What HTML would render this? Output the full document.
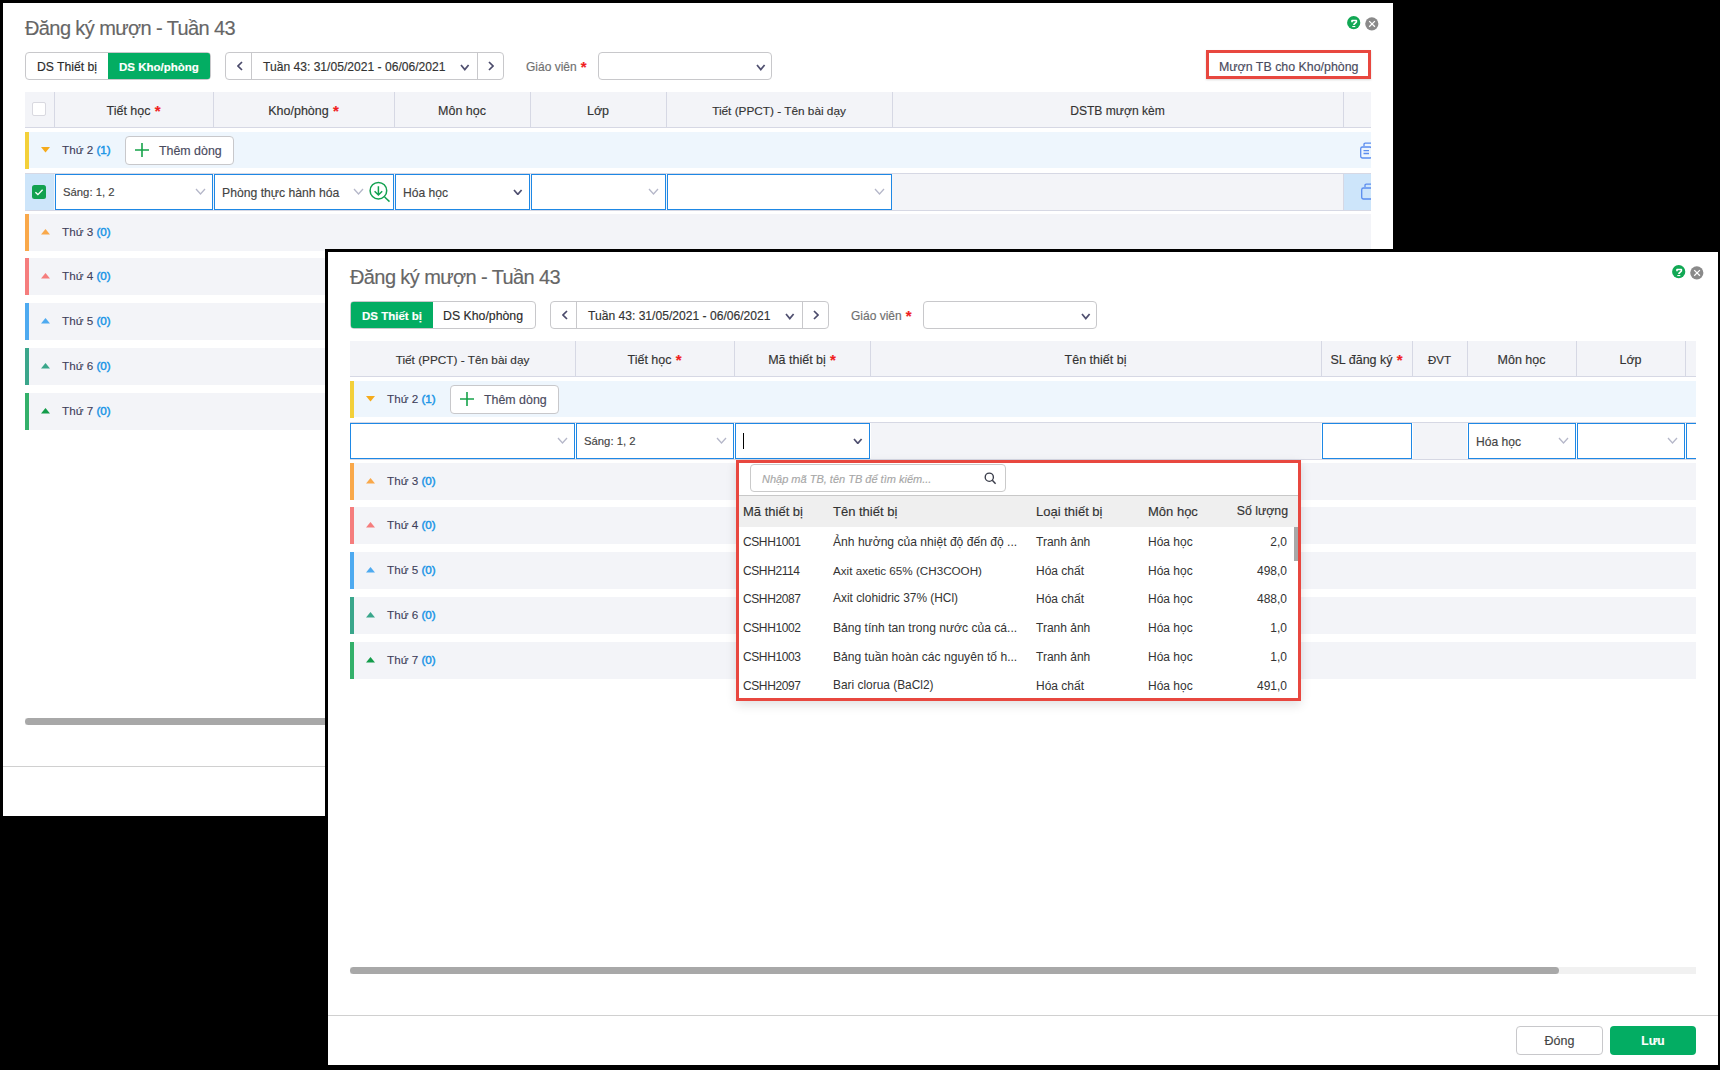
<!DOCTYPE html><html><head><meta charset="utf-8"><style>
html,body{margin:0;padding:0;width:1720px;height:1070px;overflow:hidden;background:#000;font-family:"Liberation Sans", sans-serif;}
div{font-family:"Liberation Sans", sans-serif;-webkit-text-stroke-width:0.15px;}
</style></head><body>
<div style="position:absolute;left:3px;top:3px;width:1390px;height:813px;box-sizing:border-box;background:#fff"></div>
<div style="position:absolute;left:25px;top:18px;font-size:20px;line-height:20px;color:#666;font-weight:normal;white-space:nowrap;letter-spacing:-0.6px">Đăng ký mượn - Tuần 43</div>
<svg style="position:absolute;left:1347px;top:16px" width="14" height="14"><circle cx="6.7" cy="6.7" r="6.6" fill="#11a854"/><path d="M5 6.3 V4.5 H9.4 V6 L7 8.4 V9" fill="none" stroke="#fff" stroke-width="1.6" stroke-linejoin="round"/><rect x="5.3" y="10" width="3" height="1.1" fill="#fff"/></svg><svg style="position:absolute;left:1365px;top:17px" width="14" height="14"><circle cx="6.8" cy="6.8" r="6.6" fill="#8a8a8a"/><path d="M4.2 4.1 L9.9 9.8 M9.9 4.1 L4.2 9.8" stroke="#fff" stroke-width="1.25"/></svg>
<div style="position:absolute;left:25px;top:52px;width:186px;height:28px;box-sizing:border-box;border:1px solid #c8c8cb;border-radius:4px;background:#fff"></div><div style="position:absolute;left:108px;top:53px;width:102px;height:26px;box-sizing:border-box;background:#03ad63;border-radius:0 2px 2px 0"></div><div style="position:absolute;left:37px;top:61px;font-size:12.2px;line-height:12.2px;color:#2b2b2b;font-weight:normal;white-space:nowrap;">DS Thiết bị</div><div style="position:absolute;left:119px;top:62px;font-size:11.5px;line-height:11.5px;color:#fff;font-weight:bold;white-space:nowrap;">DS Kho/phòng</div><div style="position:absolute;left:225px;top:52px;width:279px;height:28px;box-sizing:border-box;border:1px solid #c8c8cb;border-radius:4px;background:#fff"></div><div style="position:absolute;left:251px;top:53px;width:1px;height:26px;box-sizing:border-box;background:#c8c8cb"></div><div style="position:absolute;left:477px;top:53px;width:1px;height:26px;box-sizing:border-box;background:#c8c8cb"></div><svg style="position:absolute;left:237px;top:61px" width="6" height="10"><polyline points="5,1 1,5.0 5,9" fill="none" stroke="#4b4b6b" stroke-width="1.7"/></svg><svg style="position:absolute;left:488px;top:61px" width="6" height="10"><polyline points="1,1 5,5.0 1,9" fill="none" stroke="#4b4b6b" stroke-width="1.7"/></svg><div style="position:absolute;left:263px;top:61px;font-size:12.1px;line-height:12.1px;color:#333;font-weight:normal;white-space:nowrap;">Tuần 43: 31/05/2021 - 06/06/2021</div><svg style="position:absolute;left:460px;top:64px" width="9.6" height="6.6"><polyline points="1,1 4.8,5.6 8.6,1" fill="none" stroke="#505070" stroke-width="1.7"/></svg><div style="position:absolute;left:526px;top:61px;font-size:12px;line-height:12px;color:#707070;font-weight:normal;white-space:nowrap;">Giáo viên<span style="color:#f01e1e;font-size:15px;font-weight:bold;vertical-align:top;line-height:12px"> *</span></div><div style="position:absolute;left:598px;top:52px;width:174px;height:28px;box-sizing:border-box;border:1px solid #c8c8cb;border-radius:4px;background:#fff"></div><svg style="position:absolute;left:756px;top:64px" width="9.6" height="6.6"><polyline points="1,1 4.8,5.6 8.6,1" fill="none" stroke="#505070" stroke-width="1.7"/></svg>
<div style="position:absolute;left:1206px;top:50px;width:165px;height:29px;box-sizing:border-box;border:3px solid #e8473f;background:#fff;box-shadow:0 1px 2px rgba(0,0,0,.15)"></div>
<div style="position:absolute;left:1219px;top:61px;font-size:12.4px;line-height:12.4px;color:#4a4b5e;font-weight:normal;white-space:nowrap;">Mượn TB cho Kho/phòng</div>
<div style="position:absolute;left:25px;top:92px;width:1346px;height:36px;box-sizing:border-box;background:#f3f4f8;border-bottom:1px solid #d6d8e4"></div><div style="position:absolute;left:54px;top:92px;width:1px;height:35px;box-sizing:border-box;background:#d6d8e4"></div><div style="position:absolute;left:213px;top:92px;width:1px;height:35px;box-sizing:border-box;background:#d6d8e4"></div><div style="position:absolute;left:394px;top:92px;width:1px;height:35px;box-sizing:border-box;background:#d6d8e4"></div><div style="position:absolute;left:530px;top:92px;width:1px;height:35px;box-sizing:border-box;background:#d6d8e4"></div><div style="position:absolute;left:666px;top:92px;width:1px;height:35px;box-sizing:border-box;background:#d6d8e4"></div><div style="position:absolute;left:892px;top:92px;width:1px;height:35px;box-sizing:border-box;background:#d6d8e4"></div><div style="position:absolute;left:1343px;top:92px;width:1px;height:35px;box-sizing:border-box;background:#d6d8e4"></div>
<div style="position:absolute;left:32px;top:102px;width:14px;height:14px;box-sizing:border-box;border:1px solid #d9d9e0;border-radius:2px;background:#fff"></div>
<div style="position:absolute;left:54px;top:105px;width:159px;text-align:center;font-size:12.5px;line-height:12px;color:#333;white-space:nowrap">Tiết học<span style="color:#f01e1e;font-size:15px;font-weight:bold;vertical-align:top;line-height:12px"> *</span></div>
<div style="position:absolute;left:213px;top:105px;width:181px;text-align:center;font-size:12.5px;line-height:12px;color:#333;white-space:nowrap">Kho/phòng<span style="color:#f01e1e;font-size:15px;font-weight:bold;vertical-align:top;line-height:12px"> *</span></div>
<div style="position:absolute;left:394px;top:105px;width:136px;text-align:center;font-size:12.5px;line-height:12px;color:#333;white-space:nowrap">Môn học</div>
<div style="position:absolute;left:530px;top:105px;width:136px;text-align:center;font-size:12.5px;line-height:12px;color:#333;white-space:nowrap">Lớp</div>
<div style="position:absolute;left:666px;top:105px;width:226px;text-align:center;font-size:11.8px;line-height:12px;color:#333;white-space:nowrap">Tiết (PPCT) - Tên bài dạy</div>
<div style="position:absolute;left:892px;top:105px;width:451px;text-align:center;font-size:12.1px;line-height:12px;color:#333;white-space:nowrap">DSTB mượn kèm</div>
<div style="position:absolute;left:25px;top:132px;width:1346px;height:36px;box-sizing:border-box;background:#eef6fd"></div><div style="position:absolute;left:25px;top:132px;width:4px;height:37px;box-sizing:border-box;background:#f3d03a"></div><svg style="position:absolute;left:41px;top:147px" width="9" height="6"><polygon points="0,0 9,0 4.5,5.5" fill="#f5ab1c"/></svg><div style="position:absolute;left:62px;top:144px;font-size:11.7px;line-height:11.7px;color:#3e3f5a;font-weight:normal;white-space:nowrap;-webkit-text-stroke-width:0.1px">Thứ 2 <span style="color:#1a95e6;-webkit-text-stroke-width:0.45px">(1)</span></div><div style="position:absolute;left:125px;top:136px;width:109px;height:29px;box-sizing:border-box;border:1px solid #c8c8cb;border-radius:4px;background:#fff"></div><svg style="position:absolute;left:135px;top:143px" width="14" height="14"><path d="M7 0 V14 M0 7 H14" stroke="#16a34a" stroke-width="1.6"/></svg><div style="position:absolute;left:159px;top:145px;font-size:12.4px;line-height:12.4px;color:#4a4b5e;font-weight:normal;white-space:nowrap;">Thêm dòng</div>
<div style="position:absolute;left:1343px;top:132px;width:28px;height:37px;overflow:hidden"><svg style="position:absolute;left:17px;top:10px" width="20" height="20"><path d="M4 4 V2.5 Q4 1.2 5.3 1.2 H14" fill="none" stroke="#5b8def" stroke-width="1.3"/><rect x="0.7" y="5" width="11" height="11" rx="1.8" fill="none" stroke="#5b8def" stroke-width="1.3"/><path d="M3.5 8.7 H9 M3.5 11.5 H9" stroke="#5b8def" stroke-width="1.3"/></svg></div>
<div style="position:absolute;left:25px;top:173px;width:1346px;height:38px;box-sizing:border-box;background:#f3f4f8;border-top:1px solid #d6d8e4;border-bottom:1px solid #d6d8e4"></div>
<div style="position:absolute;left:25px;top:174px;width:29px;height:36px;box-sizing:border-box;background:#cde5fa"></div>
<div style="position:absolute;left:1344px;top:174px;width:27px;height:36px;box-sizing:border-box;background:#cde5fa"></div>
<div style="position:absolute;left:1343px;top:174px;width:1px;height:36px;box-sizing:border-box;background:#d6d8e4"></div>
<div style="position:absolute;left:32px;top:185px;width:14px;height:14px;box-sizing:border-box;background:#12a150;border-radius:2.5px"></div>
<svg style="position:absolute;left:32px;top:185px" width="14" height="14"><polyline points="3.4,7.3 5.9,9.6 10.6,4.8" fill="none" stroke="#fff" stroke-width="1.35"/></svg>
<div style="position:absolute;left:55px;top:174px;width:158px;height:36px;box-sizing:border-box;border:1px solid #1e88e5;background:#fff"></div>
<div style="position:absolute;left:63px;top:187px;font-size:11.3px;line-height:11.3px;color:#444;font-weight:normal;white-space:nowrap;">Sáng: 1, 2</div>
<svg style="position:absolute;left:195px;top:188px" width="11" height="7"><polyline points="1,1 5.5,6 10,1" fill="none" stroke="#b5b7c9" stroke-width="1.3"/></svg>
<div style="position:absolute;left:214px;top:174px;width:180px;height:36px;box-sizing:border-box;border:1px solid #1e88e5;background:#fff"></div>
<div style="position:absolute;left:222px;top:187px;font-size:12.2px;line-height:12.2px;color:#444;font-weight:normal;white-space:nowrap;">Phòng thực hành hóa</div>
<svg style="position:absolute;left:353px;top:188px" width="11" height="7"><polyline points="1,1 5.5,6 10,1" fill="none" stroke="#b5b7c9" stroke-width="1.3"/></svg>
<div style="position:absolute;left:395px;top:174px;width:135px;height:36px;box-sizing:border-box;border:1px solid #1e88e5;background:#fff"></div>
<div style="position:absolute;left:403px;top:187px;font-size:12.1px;line-height:12.1px;color:#444;font-weight:normal;white-space:nowrap;">Hóa học</div>
<svg style="position:absolute;left:513px;top:189px" width="9.6" height="6.4"><polyline points="1,1 4.8,5.4 8.6,1" fill="none" stroke="#505070" stroke-width="1.7"/></svg>
<div style="position:absolute;left:531px;top:174px;width:135px;height:36px;box-sizing:border-box;border:1px solid #1e88e5;background:#fff"></div>
<svg style="position:absolute;left:648px;top:188px" width="11" height="7"><polyline points="1,1 5.5,6 10,1" fill="none" stroke="#b5b7c9" stroke-width="1.3"/></svg>
<div style="position:absolute;left:667px;top:174px;width:225px;height:36px;box-sizing:border-box;border:1px solid #1e88e5;background:#fff"></div>
<svg style="position:absolute;left:874px;top:188px" width="11" height="7"><polyline points="1,1 5.5,6 10,1" fill="none" stroke="#b5b7c9" stroke-width="1.3"/></svg>
<svg style="position:absolute;left:368px;top:180px" width="24" height="24"><circle cx="10.4" cy="10.7" r="8.3" fill="none" stroke="#12a150" stroke-width="1.5"/><path d="M10.4 6.2 V15 M6.6 11.2 L10.4 15 L14.2 11.2" fill="none" stroke="#12a150" stroke-width="1.5"/><path d="M16.6 17 L21.5 21.6" stroke="#12a150" stroke-width="1.5"/></svg>
<div style="position:absolute;left:1344px;top:174px;width:27px;height:35px;overflow:hidden"><svg style="position:absolute;left:17px;top:9px" width="20" height="20"><path d="M4 4 V2.5 Q4 1.2 5.3 1.2 H14" fill="none" stroke="#5b8def" stroke-width="1.3"/><rect x="0.7" y="5" width="11" height="11" rx="1.8" fill="none" stroke="#5b8def" stroke-width="1.3"/></svg></div>
<div style="position:absolute;left:25px;top:214px;width:1346px;height:37px;box-sizing:border-box;background:#f3f4f8"></div><div style="position:absolute;left:25px;top:214px;width:4px;height:37px;box-sizing:border-box;background:#f9a84a"></div><svg style="position:absolute;left:41px;top:229px" width="9" height="6"><polygon points="0,5.5 9,5.5 4.5,0" fill="#f9a84a"/></svg><div style="position:absolute;left:62px;top:226px;font-size:11.7px;line-height:11.7px;color:#3e3f5a;font-weight:normal;white-space:nowrap;-webkit-text-stroke-width:0.1px">Thứ 3 <span style="color:#1a95e6;-webkit-text-stroke-width:0.45px">(0)</span></div>
<div style="position:absolute;left:25px;top:258px;width:1346px;height:37px;box-sizing:border-box;background:#f3f4f8"></div><div style="position:absolute;left:25px;top:258px;width:4px;height:37px;box-sizing:border-box;background:#f57d7d"></div><svg style="position:absolute;left:41px;top:273px" width="9" height="6"><polygon points="0,5.5 9,5.5 4.5,0" fill="#f57d7d"/></svg><div style="position:absolute;left:62px;top:270px;font-size:11.7px;line-height:11.7px;color:#3e3f5a;font-weight:normal;white-space:nowrap;-webkit-text-stroke-width:0.1px">Thứ 4 <span style="color:#1a95e6;-webkit-text-stroke-width:0.45px">(0)</span></div>
<div style="position:absolute;left:25px;top:303px;width:1346px;height:37px;box-sizing:border-box;background:#f3f4f8"></div><div style="position:absolute;left:25px;top:303px;width:4px;height:37px;box-sizing:border-box;background:#4eaaf0"></div><svg style="position:absolute;left:41px;top:318px" width="9" height="6"><polygon points="0,5.5 9,5.5 4.5,0" fill="#4eaaf0"/></svg><div style="position:absolute;left:62px;top:315px;font-size:11.7px;line-height:11.7px;color:#3e3f5a;font-weight:normal;white-space:nowrap;-webkit-text-stroke-width:0.1px">Thứ 5 <span style="color:#1a95e6;-webkit-text-stroke-width:0.45px">(0)</span></div>
<div style="position:absolute;left:25px;top:348px;width:1346px;height:37px;box-sizing:border-box;background:#f3f4f8"></div><div style="position:absolute;left:25px;top:348px;width:4px;height:37px;box-sizing:border-box;background:#3aa68b"></div><svg style="position:absolute;left:41px;top:363px" width="9" height="6"><polygon points="0,5.5 9,5.5 4.5,0" fill="#3aa68b"/></svg><div style="position:absolute;left:62px;top:360px;font-size:11.7px;line-height:11.7px;color:#3e3f5a;font-weight:normal;white-space:nowrap;-webkit-text-stroke-width:0.1px">Thứ 6 <span style="color:#1a95e6;-webkit-text-stroke-width:0.45px">(0)</span></div>
<div style="position:absolute;left:25px;top:393px;width:1346px;height:37px;box-sizing:border-box;background:#f3f4f8"></div><div style="position:absolute;left:25px;top:393px;width:4px;height:37px;box-sizing:border-box;background:#33b06a"></div><svg style="position:absolute;left:41px;top:408px" width="9" height="6"><polygon points="0,5.5 9,5.5 4.5,0" fill="#139c4a"/></svg><div style="position:absolute;left:62px;top:405px;font-size:11.7px;line-height:11.7px;color:#3e3f5a;font-weight:normal;white-space:nowrap;-webkit-text-stroke-width:0.1px">Thứ 7 <span style="color:#1a95e6;-webkit-text-stroke-width:0.45px">(0)</span></div>
<div style="position:absolute;left:25px;top:718px;width:1346px;height:7px;box-sizing:border-box;background:#f1f1f1"></div>
<div style="position:absolute;left:25px;top:718px;width:1209px;height:7px;box-sizing:border-box;background:#a8a8a8;border-radius:4px"></div>
<div style="position:absolute;left:3px;top:766px;width:1390px;height:1px;box-sizing:border-box;background:#d0d0d0"></div>
<div style="position:absolute;left:325px;top:249px;width:1396px;height:819px;box-sizing:border-box;background:#000"></div>
<div style="position:absolute;left:328px;top:252px;width:1390px;height:813px;box-sizing:border-box;background:#fff"></div>
<div style="position:absolute;left:350px;top:267px;font-size:20px;line-height:20px;color:#666;font-weight:normal;white-space:nowrap;letter-spacing:-0.6px">Đăng ký mượn - Tuần 43</div>
<svg style="position:absolute;left:1672px;top:265px" width="14" height="14"><circle cx="6.7" cy="6.7" r="6.6" fill="#11a854"/><path d="M5 6.3 V4.5 H9.4 V6 L7 8.4 V9" fill="none" stroke="#fff" stroke-width="1.6" stroke-linejoin="round"/><rect x="5.3" y="10" width="3" height="1.1" fill="#fff"/></svg><svg style="position:absolute;left:1690px;top:266px" width="14" height="14"><circle cx="6.8" cy="6.8" r="6.6" fill="#8a8a8a"/><path d="M4.2 4.1 L9.9 9.8 M9.9 4.1 L4.2 9.8" stroke="#fff" stroke-width="1.25"/></svg>
<div style="position:absolute;left:350px;top:301px;width:186px;height:28px;box-sizing:border-box;border:1px solid #c8c8cb;border-radius:4px;background:#fff"></div><div style="position:absolute;left:351px;top:302px;width:82px;height:26px;box-sizing:border-box;background:#03ad63;border-radius:2px 0 0 2px"></div><div style="position:absolute;left:362px;top:311px;font-size:11.5px;line-height:11.5px;color:#fff;font-weight:bold;white-space:nowrap;">DS Thiết bị</div><div style="position:absolute;left:443px;top:310px;font-size:12.3px;line-height:12.3px;color:#2b2b2b;font-weight:normal;white-space:nowrap;">DS Kho/phòng</div><div style="position:absolute;left:550px;top:301px;width:279px;height:28px;box-sizing:border-box;border:1px solid #c8c8cb;border-radius:4px;background:#fff"></div><div style="position:absolute;left:576px;top:302px;width:1px;height:26px;box-sizing:border-box;background:#c8c8cb"></div><div style="position:absolute;left:802px;top:302px;width:1px;height:26px;box-sizing:border-box;background:#c8c8cb"></div><svg style="position:absolute;left:562px;top:310px" width="6" height="10"><polyline points="5,1 1,5.0 5,9" fill="none" stroke="#4b4b6b" stroke-width="1.7"/></svg><svg style="position:absolute;left:813px;top:310px" width="6" height="10"><polyline points="1,1 5,5.0 1,9" fill="none" stroke="#4b4b6b" stroke-width="1.7"/></svg><div style="position:absolute;left:588px;top:310px;font-size:12.1px;line-height:12.1px;color:#333;font-weight:normal;white-space:nowrap;">Tuần 43: 31/05/2021 - 06/06/2021</div><svg style="position:absolute;left:785px;top:313px" width="9.6" height="6.6"><polyline points="1,1 4.8,5.6 8.6,1" fill="none" stroke="#505070" stroke-width="1.7"/></svg><div style="position:absolute;left:851px;top:310px;font-size:12px;line-height:12px;color:#707070;font-weight:normal;white-space:nowrap;">Giáo viên<span style="color:#f01e1e;font-size:15px;font-weight:bold;vertical-align:top;line-height:12px"> *</span></div><div style="position:absolute;left:923px;top:301px;width:174px;height:28px;box-sizing:border-box;border:1px solid #c8c8cb;border-radius:4px;background:#fff"></div><svg style="position:absolute;left:1081px;top:313px" width="9.6" height="6.6"><polyline points="1,1 4.8,5.6 8.6,1" fill="none" stroke="#505070" stroke-width="1.7"/></svg>
<div style="position:absolute;left:350px;top:341px;width:1346px;height:36px;box-sizing:border-box;background:#f3f4f8;border-bottom:1px solid #d6d8e4"></div><div style="position:absolute;left:575px;top:341px;width:1px;height:35px;box-sizing:border-box;background:#d6d8e4"></div><div style="position:absolute;left:734px;top:341px;width:1px;height:35px;box-sizing:border-box;background:#d6d8e4"></div><div style="position:absolute;left:870px;top:341px;width:1px;height:35px;box-sizing:border-box;background:#d6d8e4"></div><div style="position:absolute;left:1321px;top:341px;width:1px;height:35px;box-sizing:border-box;background:#d6d8e4"></div><div style="position:absolute;left:1412px;top:341px;width:1px;height:35px;box-sizing:border-box;background:#d6d8e4"></div><div style="position:absolute;left:1467px;top:341px;width:1px;height:35px;box-sizing:border-box;background:#d6d8e4"></div><div style="position:absolute;left:1576px;top:341px;width:1px;height:35px;box-sizing:border-box;background:#d6d8e4"></div><div style="position:absolute;left:1685px;top:341px;width:1px;height:35px;box-sizing:border-box;background:#d6d8e4"></div>
<div style="position:absolute;left:350px;top:354px;width:225px;text-align:center;font-size:11.8px;line-height:12px;color:#333;white-space:nowrap">Tiết (PPCT) - Tên bài dạy</div>
<div style="position:absolute;left:575px;top:354px;width:159px;text-align:center;font-size:12.5px;line-height:12px;color:#333;white-space:nowrap">Tiết học<span style="color:#f01e1e;font-size:15px;font-weight:bold;vertical-align:top;line-height:12px"> *</span></div>
<div style="position:absolute;left:734px;top:354px;width:136px;text-align:center;font-size:12.5px;line-height:12px;color:#333;white-space:nowrap">Mã thiết bị<span style="color:#f01e1e;font-size:15px;font-weight:bold;vertical-align:top;line-height:12px"> *</span></div>
<div style="position:absolute;left:870px;top:354px;width:451px;text-align:center;font-size:12.5px;line-height:12px;color:#333;white-space:nowrap">Tên thiết bị</div>
<div style="position:absolute;left:1321px;top:354px;width:91px;text-align:center;font-size:12.5px;line-height:12px;color:#333;white-space:nowrap">SL đăng ký<span style="color:#f01e1e;font-size:15px;font-weight:bold;vertical-align:top;line-height:12px"> *</span></div>
<div style="position:absolute;left:1412px;top:354px;width:55px;text-align:center;font-size:11.5px;line-height:12px;color:#333;white-space:nowrap">ĐVT</div>
<div style="position:absolute;left:1467px;top:354px;width:109px;text-align:center;font-size:12.5px;line-height:12px;color:#333;white-space:nowrap">Môn học</div>
<div style="position:absolute;left:1576px;top:354px;width:109px;text-align:center;font-size:12.5px;line-height:12px;color:#333;white-space:nowrap">Lớp</div>
<div style="position:absolute;left:350px;top:381px;width:1346px;height:36px;box-sizing:border-box;background:#eef6fd"></div><div style="position:absolute;left:350px;top:381px;width:4px;height:37px;box-sizing:border-box;background:#f3d03a"></div><svg style="position:absolute;left:366px;top:396px" width="9" height="6"><polygon points="0,0 9,0 4.5,5.5" fill="#f5ab1c"/></svg><div style="position:absolute;left:387px;top:393px;font-size:11.7px;line-height:11.7px;color:#3e3f5a;font-weight:normal;white-space:nowrap;-webkit-text-stroke-width:0.1px">Thứ 2 <span style="color:#1a95e6;-webkit-text-stroke-width:0.45px">(1)</span></div><div style="position:absolute;left:450px;top:385px;width:109px;height:29px;box-sizing:border-box;border:1px solid #c8c8cb;border-radius:4px;background:#fff"></div><svg style="position:absolute;left:460px;top:392px" width="14" height="14"><path d="M7 0 V14 M0 7 H14" stroke="#16a34a" stroke-width="1.6"/></svg><div style="position:absolute;left:484px;top:394px;font-size:12.4px;line-height:12.4px;color:#4a4b5e;font-weight:normal;white-space:nowrap;">Thêm dòng</div>
<div style="position:absolute;left:350px;top:422px;width:1346px;height:38px;box-sizing:border-box;background:#f3f4f8;border-top:1px solid #d6d8e4;border-bottom:1px solid #d6d8e4"></div>
<div style="position:absolute;left:575px;top:423px;width:1px;height:35px;box-sizing:border-box;background:#fff"></div>
<div style="position:absolute;left:734px;top:423px;width:1px;height:35px;box-sizing:border-box;background:#fff"></div>
<div style="position:absolute;left:870px;top:423px;width:1px;height:35px;box-sizing:border-box;background:#fff"></div>
<div style="position:absolute;left:1321px;top:423px;width:1px;height:35px;box-sizing:border-box;background:#fff"></div>
<div style="position:absolute;left:1412px;top:423px;width:1px;height:35px;box-sizing:border-box;background:#fff"></div>
<div style="position:absolute;left:1467px;top:423px;width:1px;height:35px;box-sizing:border-box;background:#fff"></div>
<div style="position:absolute;left:1576px;top:423px;width:1px;height:35px;box-sizing:border-box;background:#fff"></div>
<div style="position:absolute;left:1685px;top:423px;width:1px;height:35px;box-sizing:border-box;background:#fff"></div>
<div style="position:absolute;left:350px;top:423px;width:225px;height:36px;box-sizing:border-box;border:1px solid #1e88e5;background:#fff"></div>
<svg style="position:absolute;left:557px;top:437px" width="11" height="7"><polyline points="1,1 5.5,6 10,1" fill="none" stroke="#b5b7c9" stroke-width="1.3"/></svg>
<div style="position:absolute;left:576px;top:423px;width:158px;height:36px;box-sizing:border-box;border:1px solid #1e88e5;background:#fff"></div>
<div style="position:absolute;left:584px;top:436px;font-size:11.3px;line-height:11.3px;color:#444;font-weight:normal;white-space:nowrap;">Sáng: 1, 2</div>
<svg style="position:absolute;left:716px;top:437px" width="11" height="7"><polyline points="1,1 5.5,6 10,1" fill="none" stroke="#b5b7c9" stroke-width="1.3"/></svg>
<div style="position:absolute;left:735px;top:423px;width:135px;height:36px;box-sizing:border-box;border:1px solid #1e88e5;background:#fff"></div>
<svg style="position:absolute;left:853px;top:438px" width="9.6" height="6.4"><polyline points="1,1 4.8,5.4 8.6,1" fill="none" stroke="#505070" stroke-width="1.7"/></svg>
<div style="position:absolute;left:1322px;top:423px;width:90px;height:36px;box-sizing:border-box;border:1px solid #1e88e5;background:#fff"></div>
<div style="position:absolute;left:1468px;top:423px;width:108px;height:36px;box-sizing:border-box;border:1px solid #1e88e5;background:#fff"></div>
<div style="position:absolute;left:1476px;top:436px;font-size:12.1px;line-height:12.1px;color:#444;font-weight:normal;white-space:nowrap;">Hóa học</div>
<svg style="position:absolute;left:1558px;top:437px" width="11" height="7"><polyline points="1,1 5.5,6 10,1" fill="none" stroke="#b5b7c9" stroke-width="1.3"/></svg>
<div style="position:absolute;left:1577px;top:423px;width:108px;height:36px;box-sizing:border-box;border:1px solid #1e88e5;background:#fff"></div>
<svg style="position:absolute;left:1667px;top:437px" width="11" height="7"><polyline points="1,1 5.5,6 10,1" fill="none" stroke="#b5b7c9" stroke-width="1.3"/></svg>
<div style="position:absolute;left:1686px;top:423px;width:10px;height:36px;box-sizing:border-box;border:1px solid #1e88e5;border-right:none;background:#fff"></div>
<div style="position:absolute;left:743px;top:433px;width:1px;height:16px;box-sizing:border-box;background:#000"></div>
<div style="position:absolute;left:350px;top:463px;width:1346px;height:37px;box-sizing:border-box;background:#f3f4f8"></div><div style="position:absolute;left:350px;top:463px;width:4px;height:37px;box-sizing:border-box;background:#f9a84a"></div><svg style="position:absolute;left:366px;top:478px" width="9" height="6"><polygon points="0,5.5 9,5.5 4.5,0" fill="#f9a84a"/></svg><div style="position:absolute;left:387px;top:475px;font-size:11.7px;line-height:11.7px;color:#3e3f5a;font-weight:normal;white-space:nowrap;-webkit-text-stroke-width:0.1px">Thứ 3 <span style="color:#1a95e6;-webkit-text-stroke-width:0.45px">(0)</span></div>
<div style="position:absolute;left:350px;top:507px;width:1346px;height:37px;box-sizing:border-box;background:#f3f4f8"></div><div style="position:absolute;left:350px;top:507px;width:4px;height:37px;box-sizing:border-box;background:#f57d7d"></div><svg style="position:absolute;left:366px;top:522px" width="9" height="6"><polygon points="0,5.5 9,5.5 4.5,0" fill="#f57d7d"/></svg><div style="position:absolute;left:387px;top:519px;font-size:11.7px;line-height:11.7px;color:#3e3f5a;font-weight:normal;white-space:nowrap;-webkit-text-stroke-width:0.1px">Thứ 4 <span style="color:#1a95e6;-webkit-text-stroke-width:0.45px">(0)</span></div>
<div style="position:absolute;left:350px;top:552px;width:1346px;height:37px;box-sizing:border-box;background:#f3f4f8"></div><div style="position:absolute;left:350px;top:552px;width:4px;height:37px;box-sizing:border-box;background:#4eaaf0"></div><svg style="position:absolute;left:366px;top:567px" width="9" height="6"><polygon points="0,5.5 9,5.5 4.5,0" fill="#4eaaf0"/></svg><div style="position:absolute;left:387px;top:564px;font-size:11.7px;line-height:11.7px;color:#3e3f5a;font-weight:normal;white-space:nowrap;-webkit-text-stroke-width:0.1px">Thứ 5 <span style="color:#1a95e6;-webkit-text-stroke-width:0.45px">(0)</span></div>
<div style="position:absolute;left:350px;top:597px;width:1346px;height:37px;box-sizing:border-box;background:#f3f4f8"></div><div style="position:absolute;left:350px;top:597px;width:4px;height:37px;box-sizing:border-box;background:#3aa68b"></div><svg style="position:absolute;left:366px;top:612px" width="9" height="6"><polygon points="0,5.5 9,5.5 4.5,0" fill="#3aa68b"/></svg><div style="position:absolute;left:387px;top:609px;font-size:11.7px;line-height:11.7px;color:#3e3f5a;font-weight:normal;white-space:nowrap;-webkit-text-stroke-width:0.1px">Thứ 6 <span style="color:#1a95e6;-webkit-text-stroke-width:0.45px">(0)</span></div>
<div style="position:absolute;left:350px;top:642px;width:1346px;height:37px;box-sizing:border-box;background:#f3f4f8"></div><div style="position:absolute;left:350px;top:642px;width:4px;height:37px;box-sizing:border-box;background:#33b06a"></div><svg style="position:absolute;left:366px;top:657px" width="9" height="6"><polygon points="0,5.5 9,5.5 4.5,0" fill="#139c4a"/></svg><div style="position:absolute;left:387px;top:654px;font-size:11.7px;line-height:11.7px;color:#3e3f5a;font-weight:normal;white-space:nowrap;-webkit-text-stroke-width:0.1px">Thứ 7 <span style="color:#1a95e6;-webkit-text-stroke-width:0.45px">(0)</span></div>
<div style="position:absolute;left:350px;top:967px;width:1346px;height:7px;box-sizing:border-box;background:#f1f1f1"></div>
<div style="position:absolute;left:350px;top:967px;width:1209px;height:7px;box-sizing:border-box;background:#a8a8a8;border-radius:4px"></div>
<div style="position:absolute;left:328px;top:1015px;width:1390px;height:1px;box-sizing:border-box;background:#d0d0d0"></div>
<div style="position:absolute;left:1516px;top:1026px;width:87px;height:29px;box-sizing:border-box;border:1px solid #c8c8cb;border-radius:4px;background:#fff"></div>
<div style="position:absolute;left:1516px;top:1035px;width:87px;text-align:center;font-size:12.5px;line-height:12px;color:#444">Đóng</div>
<div style="position:absolute;left:1610px;top:1026px;width:86px;height:29px;box-sizing:border-box;border-radius:4px;background:#03ad63"></div>
<div style="position:absolute;left:1610px;top:1035px;width:86px;text-align:center;font-size:12px;line-height:12px;color:#fff;font-weight:bold">Lưu</div>
<div style="position:absolute;left:736px;top:460px;width:565px;height:241px;box-sizing:border-box;border:3px solid #e8473f;background:#fff;box-shadow:0 4px 10px rgba(0,0,0,.12)"></div>
<div style="position:absolute;left:750px;top:464px;width:256px;height:28px;box-sizing:border-box;border:1px solid #cacaca;border-radius:4px;background:#fff"></div>
<div style="position:absolute;left:762px;top:474px;font-size:11px;line-height:11px;color:#a7a7a7;font-weight:normal;white-space:nowrap;font-style:italic">Nhập mã TB, tên TB để tìm kiếm...</div>
<svg style="position:absolute;left:983px;top:471px" width="14" height="14"><circle cx="6.3" cy="6.2" r="4.1" fill="none" stroke="#3a3d4a" stroke-width="1.35"/><path d="M9.3 9.3 L12.6 12.8" stroke="#3a3d4a" stroke-width="1.5"/></svg>
<div style="position:absolute;left:739px;top:495px;width:559px;height:1px;box-sizing:border-box;background:#c8c8c8"></div>
<div style="position:absolute;left:739px;top:496px;width:559px;height:31px;box-sizing:border-box;background:#efefef"></div>
<div style="position:absolute;left:743px;top:505px;font-size:13px;line-height:13px;color:#333;font-weight:normal;white-space:nowrap;">Mã thiết bị</div>
<div style="position:absolute;left:833px;top:505px;font-size:13px;line-height:13px;color:#333;font-weight:normal;white-space:nowrap;">Tên thiết bị</div>
<div style="position:absolute;left:1036px;top:505px;font-size:13px;line-height:13px;color:#333;font-weight:normal;white-space:nowrap;">Loại thiết bị</div>
<div style="position:absolute;left:1148px;top:505px;font-size:13px;line-height:13px;color:#333;font-weight:normal;white-space:nowrap;">Môn học</div>
<div style="position:absolute;left:1200px;top:505px;width:88px;text-align:right;font-size:12.3px;line-height:12px;color:#333">Số lượng</div>
<div style="position:absolute;left:743px;top:536px;font-size:12px;line-height:12px;color:#333;font-weight:normal;white-space:nowrap;letter-spacing:-0.4px;-webkit-text-stroke-width:0">CSHH1001</div>
<div style="position:absolute;left:833px;top:536px;font-size:12.1px;line-height:12.1px;color:#333;font-weight:normal;white-space:nowrap;-webkit-text-stroke-width:0">Ảnh hưởng của nhiệt độ đến độ ...</div>
<div style="position:absolute;left:1036px;top:536px;font-size:12px;line-height:12px;color:#333;font-weight:normal;white-space:nowrap;-webkit-text-stroke-width:0">Tranh ảnh</div>
<div style="position:absolute;left:1148px;top:536px;font-size:12px;line-height:12px;color:#333;font-weight:normal;white-space:nowrap;-webkit-text-stroke-width:0">Hóa học</div>
<div style="position:absolute;left:1200px;top:536px;width:87px;text-align:right;font-size:12px;line-height:12px;color:#333;-webkit-text-stroke-width:0">2,0</div>
<div style="position:absolute;left:743px;top:565px;font-size:12px;line-height:12px;color:#333;font-weight:normal;white-space:nowrap;letter-spacing:-0.4px;-webkit-text-stroke-width:0">CSHH2114</div>
<div style="position:absolute;left:833px;top:565px;font-size:11.66px;line-height:11.66px;color:#333;font-weight:normal;white-space:nowrap;-webkit-text-stroke-width:0">Axit axetic 65% (CH3COOH)</div>
<div style="position:absolute;left:1036px;top:565px;font-size:12px;line-height:12px;color:#333;font-weight:normal;white-space:nowrap;-webkit-text-stroke-width:0">Hóa chất</div>
<div style="position:absolute;left:1148px;top:565px;font-size:12px;line-height:12px;color:#333;font-weight:normal;white-space:nowrap;-webkit-text-stroke-width:0">Hóa học</div>
<div style="position:absolute;left:1200px;top:565px;width:87px;text-align:right;font-size:12px;line-height:12px;color:#333;-webkit-text-stroke-width:0">498,0</div>
<div style="position:absolute;left:743px;top:593px;font-size:12px;line-height:12px;color:#333;font-weight:normal;white-space:nowrap;letter-spacing:-0.4px;-webkit-text-stroke-width:0">CSHH2087</div>
<div style="position:absolute;left:833px;top:593px;font-size:11.92px;line-height:11.92px;color:#333;font-weight:normal;white-space:nowrap;-webkit-text-stroke-width:0">Axit clohidric 37% (HCl)</div>
<div style="position:absolute;left:1036px;top:593px;font-size:12px;line-height:12px;color:#333;font-weight:normal;white-space:nowrap;-webkit-text-stroke-width:0">Hóa chất</div>
<div style="position:absolute;left:1148px;top:593px;font-size:12px;line-height:12px;color:#333;font-weight:normal;white-space:nowrap;-webkit-text-stroke-width:0">Hóa học</div>
<div style="position:absolute;left:1200px;top:593px;width:87px;text-align:right;font-size:12px;line-height:12px;color:#333;-webkit-text-stroke-width:0">488,0</div>
<div style="position:absolute;left:743px;top:622px;font-size:12px;line-height:12px;color:#333;font-weight:normal;white-space:nowrap;letter-spacing:-0.4px;-webkit-text-stroke-width:0">CSHH1002</div>
<div style="position:absolute;left:833px;top:622px;font-size:12.1px;line-height:12.1px;color:#333;font-weight:normal;white-space:nowrap;-webkit-text-stroke-width:0">Bảng tính tan trong nước của cá...</div>
<div style="position:absolute;left:1036px;top:622px;font-size:12px;line-height:12px;color:#333;font-weight:normal;white-space:nowrap;-webkit-text-stroke-width:0">Tranh ảnh</div>
<div style="position:absolute;left:1148px;top:622px;font-size:12px;line-height:12px;color:#333;font-weight:normal;white-space:nowrap;-webkit-text-stroke-width:0">Hóa học</div>
<div style="position:absolute;left:1200px;top:622px;width:87px;text-align:right;font-size:12px;line-height:12px;color:#333;-webkit-text-stroke-width:0">1,0</div>
<div style="position:absolute;left:743px;top:651px;font-size:12px;line-height:12px;color:#333;font-weight:normal;white-space:nowrap;letter-spacing:-0.4px;-webkit-text-stroke-width:0">CSHH1003</div>
<div style="position:absolute;left:833px;top:651px;font-size:12.1px;line-height:12.1px;color:#333;font-weight:normal;white-space:nowrap;-webkit-text-stroke-width:0">Bảng tuần hoàn các nguyên tố h...</div>
<div style="position:absolute;left:1036px;top:651px;font-size:12px;line-height:12px;color:#333;font-weight:normal;white-space:nowrap;-webkit-text-stroke-width:0">Tranh ảnh</div>
<div style="position:absolute;left:1148px;top:651px;font-size:12px;line-height:12px;color:#333;font-weight:normal;white-space:nowrap;-webkit-text-stroke-width:0">Hóa học</div>
<div style="position:absolute;left:1200px;top:651px;width:87px;text-align:right;font-size:12px;line-height:12px;color:#333;-webkit-text-stroke-width:0">1,0</div>
<div style="position:absolute;left:743px;top:680px;font-size:12px;line-height:12px;color:#333;font-weight:normal;white-space:nowrap;letter-spacing:-0.4px;-webkit-text-stroke-width:0">CSHH2097</div>
<div style="position:absolute;left:833px;top:680px;font-size:11.92px;line-height:11.92px;color:#333;font-weight:normal;white-space:nowrap;-webkit-text-stroke-width:0">Bari clorua (BaCl2)</div>
<div style="position:absolute;left:1036px;top:680px;font-size:12px;line-height:12px;color:#333;font-weight:normal;white-space:nowrap;-webkit-text-stroke-width:0">Hóa chất</div>
<div style="position:absolute;left:1148px;top:680px;font-size:12px;line-height:12px;color:#333;font-weight:normal;white-space:nowrap;-webkit-text-stroke-width:0">Hóa học</div>
<div style="position:absolute;left:1200px;top:680px;width:87px;text-align:right;font-size:12px;line-height:12px;color:#333;-webkit-text-stroke-width:0">491,0</div>
<div style="position:absolute;left:1294px;top:527px;width:4px;height:34px;box-sizing:border-box;background:#a8a8a8"></div>
</body></html>
